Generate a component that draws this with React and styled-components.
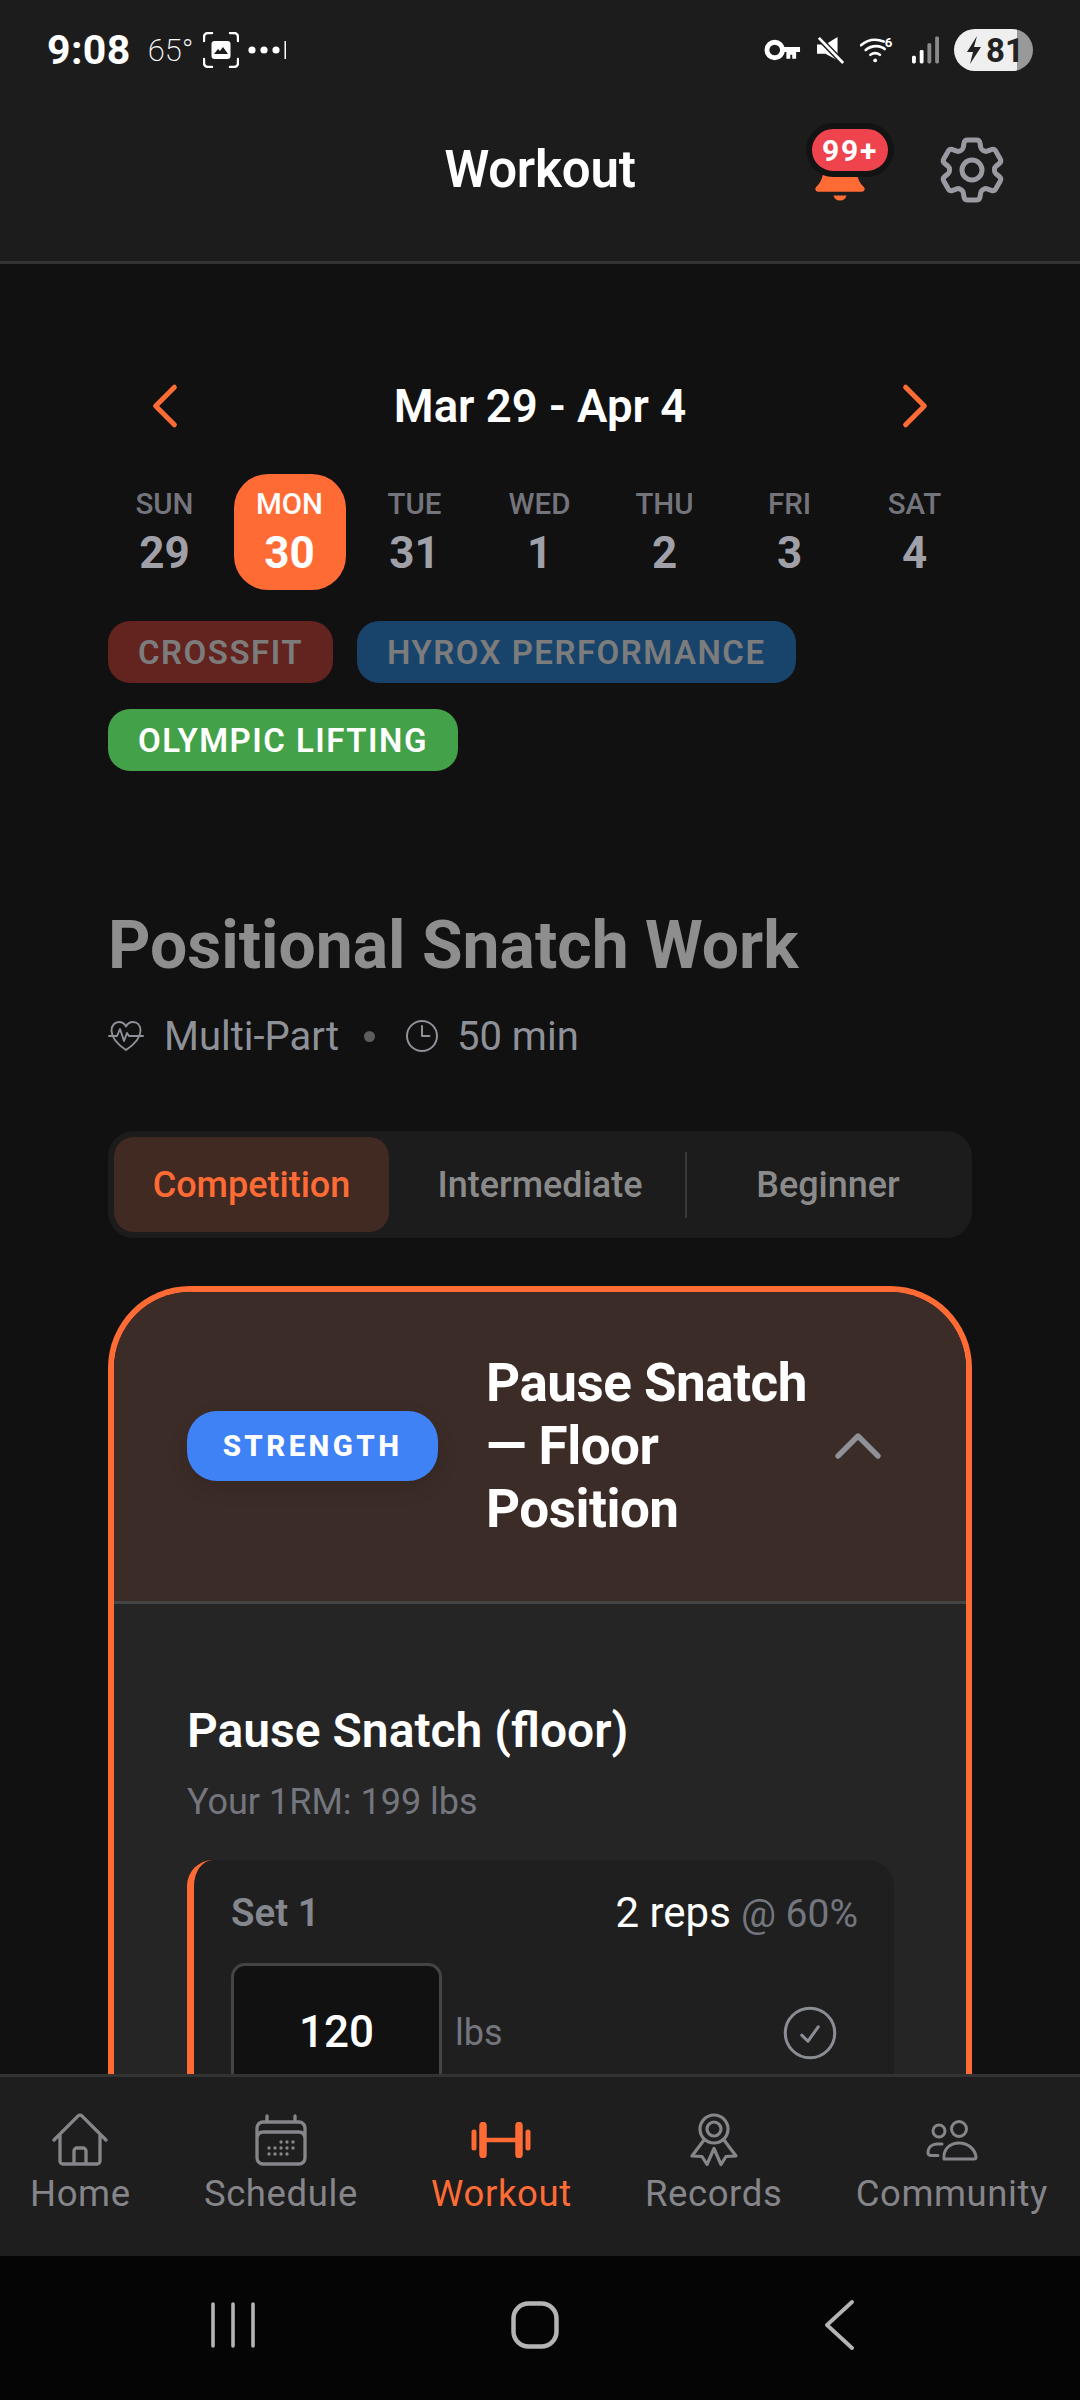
import React from "react";
import styled, { createGlobalStyle } from "styled-components";
import { HiOutlineCalendarDays, HiOutlineHome, HiOutlineClock, HiOutlineCheckCircle, HiOutlineChevronLeft, HiOutlineChevronRight, HiOutlineChevronUp } from "react-icons/hi2";

const Global = createGlobalStyle`
  html, body { margin: 0; padding: 0; background: #111; }
  * { box-sizing: border-box; }
  body { font-family: Roboto, "Liberation Sans", sans-serif; }
`;
const Screen = styled.div`width:1080px;height:2400px;display:flex;flex-direction:column;overflow:hidden;background:#111;`;
const Top = styled.header`height:264px;flex:none;background:#1c1c1c;border-bottom:3px solid #333;display:flex;flex-direction:column;`;
const Status = styled.div`height:96px;flex:none;display:flex;align-items:center;padding:4px 47px 0 47px;color:#fff;`;
const Time = styled.span`font-size:41px;font-weight:700;letter-spacing:.4px;`;
const Temp = styled.span`font-size:31px;font-weight:200;margin-left:17px;`;
const StatusLeft = styled.div`display:flex;align-items:center;flex:1;`;
const StatusRight = styled.div`display:flex;align-items:center;gap:15.5px;`;
const Battery = styled.div`width:79px;height:42px;border-radius:21px;overflow:hidden;display:flex;align-items:center;background:linear-gradient(90deg,#efefef 0 63px,#999 63px);color:#222;font-size:33px;font-weight:700;padding-left:11px;gap:3px;`;
const TitleBar = styled.div`flex:1;display:flex;align-items:center;justify-content:center;position:relative;padding-bottom:18px;`;
const Title = styled.h1`margin:0;color:#fff;font-size:51px;font-weight:600;letter-spacing:-.2px;`;
const Bell = styled.div`position:absolute;left:807px;top:49px;width:66px;height:66px;color:#ff6b35;`;
const Badge = styled.span`position:absolute;left:-1px;top:-22px;width:88px;height:54px;border-radius:27px;background:#ef444d;border:6px solid #131313;color:#fff;font-size:30px;font-weight:700;letter-spacing:1.8px;display:flex;align-items:center;justify-content:center;`;
const Gear = styled.div`position:absolute;left:932px;top:34px;width:80px;height:80px;color:#9a9aa2;`;
const Scroll = styled.main`flex:1;min-height:0;overflow:hidden;padding:118px 108px 0;`;
const WeekHead = styled.div`display:flex;align-items:center;justify-content:space-between;padding:0 27px;height:48px;color:#ff6b35;`;
const WeekTitle = styled.div`color:#fff;font-size:45.500px;font-weight:600;`;
const Days = styled.div`margin-top:44px;display:grid;grid-template-columns:repeat(7,125px);margin-left:-6px;`;
const Day = styled.div`height:116px;width:112px;justify-self:center;border-radius:34px;display:flex;flex-direction:column;align-items:center;justify-content:center;background:${p=>p.$on?"#ff6b35":"transparent"};`;
const DayName = styled.span`font-size:29.500px;font-weight:500;line-height:36px;color:${p=>p.$on?"#fff":"#74747c"};`;
const DayNum = styled.span`font-size:44px;font-weight:700;line-height:50px;margin-top:6px;color:${p=>p.$on?"#fff":"#a0a0a8"};`;
const Tags = styled.div`margin-top:31px;display:flex;flex-wrap:wrap;gap:26px 24px;width:864px;`;
const Tag = styled.span`height:62px;border-radius:22px;padding:0 30px;display:flex;align-items:center;background:${p=>p.$bg};color:${p=>p.$fg};font-size:33px;font-weight:600;letter-spacing:1.5px;`;
const WorkoutTitle = styled.h2`margin:139px 0 0;font-size:66px;line-height:72px;font-weight:700;color:#8e8e8e;`;
const Meta = styled.div`margin-top:30px;height:48px;display:flex;align-items:center;font-size:40px;color:#8f9199;`;
const MetaIcon = styled.span`display:flex;color:#8f9199;margin-right:${p=>p.$mr}px;`;
const Dot = styled.span`width:11px;height:11px;border-radius:50%;background:#5c5c5c;margin:0 27px 0 25px;`;
const Tabs = styled.div`margin-top:71px;height:107px;border-radius:26px;background:#1c1c1c;padding:6px;display:flex;align-items:stretch;overflow:hidden;`;
const TabBtn = styled.div`display:flex;flex:none;align-items:center;justify-content:center;width:${p=>p.$w}px;margin-left:${p=>p.$ml||0}px;border-radius:20px;font-size:36px;font-weight:500;background:${p=>p.$on?"#412a22":"transparent"};color:${p=>p.$on?"#ff6b35":"#8a8a8a"};`;
const TabRule = styled.span`width:2px;flex:none;height:66px;align-self:center;background:#3a3a3a;`;
const Card = styled.section`margin-top:48px;border:6px solid #ff6b35;border-bottom:none;border-radius:82px 82px 0 0;overflow:hidden;background:#252525;height:800px;`;
const CardHead = styled.div`height:312px;background:#3c2c27;border-bottom:3px solid #444;display:flex;align-items:center;padding:0 0 1px 73px;`;
const Pill = styled.span`width:251px;height:70px;flex:none;border-radius:30px;background:#3f82f6;color:#fff;font-size:29.500px;font-weight:800;letter-spacing:3.4px;display:flex;align-items:center;justify-content:center;box-shadow:0 8px 20px rgba(0,0,0,.12);`;
const CardTitle = styled.h3`margin:0 0 0 48px;width:340px;flex:none;font-size:53px;line-height:63px;font-weight:700;color:#fff;letter-spacing:-.5px;`;
const Caret = styled.span`display:flex;color:#8f9098;`;
const CardBody = styled.div`padding:100px 73px 0;`;
const Ex = styled.h4`margin:0;font-size:48px;line-height:54px;font-weight:600;color:#fff;`;
const Rm = styled.div`margin-top:23px;font-size:36px;line-height:42px;color:#74767e;`;
const SetCard = styled.div`margin-top:37px;width:707px;height:400px;border-left:7px solid #ff6b35;border-radius:26px;background:#1f1f1f;padding:24px 36px 0 37px;`;
const SetTop = styled.div`display:flex;align-items:center;justify-content:space-between;height:56px;`;
const SetName = styled.span`font-size:38.500px;font-weight:600;color:#85878f;`;
const Reps = styled.span`font-size:42px;color:#fff;`;
const Pct = styled.span`font-size:39px;color:#74767e;margin-left:10px;`;
const SetRow = styled.div`margin-top:23px;display:flex;align-items:flex-start;`;
const Weight = styled.div`width:211px;height:200px;border:3px solid #444;border-radius:14px;background:#111;color:#fff;font-size:44px;font-weight:500;display:flex;justify-content:center;padding-top:41px;line-height:50px;`;
const Unit = styled.span`margin:49px 0 0 13px;font-size:36px;line-height:42px;color:#74767e;`;
const Check = styled.span`margin:37px 15px 0 auto;display:flex;color:#8b8d95;`;
const Nav = styled.nav`height:182px;flex:none;background:#1e1e1e;border-top:3px solid #333;display:flex;justify-content:space-between;padding:36px 32px 0 30px;`;
const NavItem = styled.div`display:flex;flex-direction:column;align-items:center;color:${p=>p.$on?"#ff6b35":"#85858a"};`;
const NavIcon = styled.span`height:54px;width:54px;display:flex;align-items:center;justify-content:center;svg{flex:none;}`;
const NavLabel = styled.span`margin-top:6px;font-size:36.500px;line-height:41px;height:41px;overflow:hidden;letter-spacing:.6px;`;
const Android = styled.div`height:144px;flex:none;background:#050505;display:flex;align-items:center;color:#b4b4b4;padding:0 0 7px 211px;`;
const AndroidKey = styled.span`display:flex;margin-left:${p=>p.$ml}px;`;

const Key = () => <svg width="37" height="22" viewBox="0 0 38 22"><circle cx="11" cy="11" r="8" fill="none" stroke="#fff" strokeWidth="5"/><path d="M18 8h19v5h-4v7h-4v-4h-2v4h-4v-7h-5z" fill="#fff"/></svg>;
const Mute = () => <svg width="28" height="30" viewBox="0 0 30 30"><path d="M0 9h9L22 1v25L9 19H0z" fill="#fff"/><path d="M2 2l26 27" stroke="#1c1c1c" strokeWidth="6"/><path d="M2 2l26 27" stroke="#fff" strokeWidth="3"/></svg>;
const Wifi = () => <svg width="36" height="30" viewBox="0 0 38 30" fill="none" stroke="#fff" strokeWidth="2.8" strokeLinecap="round"><path d="M1 10c7-6 16-7 24-4"/><path d="M6 15c5-4 11-5 17-3 1 .3 2 1 3 2"/><path d="M11 20c3-2 7-2 10 0"/><circle cx="16" cy="26" r="2" fill="#fff" stroke="none"/><text x="26" y="12" fontSize="14" fontWeight="700" fill="#fff" stroke="none" fontFamily="Roboto">6</text></svg>;
const Signal = () => <svg width="27" height="30" viewBox="0 0 28 30"><rect x="0" y="21" width="4" height="8" rx="1.5" fill="#fff"/><rect x="8" y="15" width="4" height="14" rx="1.5" fill="#fff"/><rect x="16" y="8" width="4" height="21" rx="1.5" fill="#8a8a8a"/><rect x="24" y="1" width="4" height="28" rx="1.5" fill="#8a8a8a"/></svg>;
const Bolt = () => <svg width="18" height="30" viewBox="0 0 18 30"><path d="M12 1 2 17h6l-3 12 11-17h-7z" fill="#222"/></svg>;
const Shot = () => <svg width="36" height="36" viewBox="0 0 36 36" style={{marginLeft:9}}><path d="M1 9V5a4 4 0 0 1 4-4h4M27 1h4a4 4 0 0 1 4 4v4M35 27v4a4 4 0 0 1-4 4h-4M9 35H5a4 4 0 0 1-4-4v-4" fill="none" stroke="#fff" strokeWidth="2.4" strokeLinecap="round"/><rect x="8.5" y="9" width="19" height="18" rx="3" fill="#fff"/><path d="M11 22l4-5 2 2 3-4 5 7z" fill="#1c1c1c"/></svg>;
const Dots = () => <svg width="38" height="20" viewBox="0 0 38 20" style={{marginLeft:9}}><circle cx="4" cy="10" r="3.6" fill="#fff"/><circle cx="16" cy="10" r="3.6" fill="#fff"/><circle cx="28" cy="10" r="3.6" fill="#fff"/><rect x="36.5" y="1" width="1.6" height="18" fill="#fff"/></svg>;
const BellIcon = () => <svg width="66" height="66" viewBox="0 0 24 24" fill="currentColor"><path d="M3.262 15.326A1 1 0 0 0 4 17h16a1 1 0 0 0 .74-1.673C19.41 13.956 18 12.499 18 8A6 6 0 0 0 6 8c0 4.499-1.411 5.956-2.738 7.326"/><path d="M9.6 18.400h4.800a2.500 2.500 0 0 1-4.800 0z"/></svg>;
const GearIcon = () => <svg width="80" height="80" viewBox="0 0 24 24" fill="none" stroke="currentColor" strokeWidth="1.5" strokeLinecap="round" strokeLinejoin="round"><path d="M9.594 3.94c.09-.542.56-.94 1.11-.94h2.593c.55 0 1.02.398 1.11.94l.213 1.281c.063.374.313.686.645.87.074.04.147.083.22.127.325.196.72.257 1.075.124l1.217-.456a1.125 1.125 0 0 1 1.37.49l1.296 2.247a1.125 1.125 0 0 1-.26 1.431l-1.003.827c-.293.241-.438.613-.43.992a7.723 7.723 0 0 1 0 .255c-.008.378.137.75.43.991l1.004.827c.424.35.534.955.26 1.43l-1.298 2.247a1.125 1.125 0 0 1-1.369.491l-1.217-.456c-.355-.133-.75-.072-1.076.124a6.47 6.47 0 0 1-.22.128c-.331.183-.581.495-.644.869l-.213 1.281c-.09.543-.56.94-1.11.94h-2.594c-.55 0-1.019-.398-1.11-.94l-.213-1.281c-.062-.374-.312-.686-.644-.87a6.52 6.52 0 0 1-.22-.127c-.325-.196-.72-.257-1.076-.124l-1.217.456a1.125 1.125 0 0 1-1.369-.49l-1.297-2.247a1.125 1.125 0 0 1 .26-1.431l1.004-.827c.292-.24.437-.613.43-.991a6.932 6.932 0 0 1 0-.255c.007-.38-.138-.751-.43-.992l-1.004-.827a1.125 1.125 0 0 1-.26-1.43l1.297-2.247a1.125 1.125 0 0 1 1.37-.491l1.216.456c.356.133.751.072 1.076-.124.072-.044.146-.086.22-.128.332-.183.582-.495.644-.869l.214-1.28Z"/><circle cx="12" cy="12" r="3"/></svg>;
const HeartPulse = () => <svg width="36" height="34" viewBox="0 0 36 34" fill="none" stroke="currentColor" strokeWidth="1.900" strokeLinejoin="round" strokeLinecap="round"><path d="M18 31C12 27 4 21 3.500 12 3.500 6 7 3 11 3c3 0 5.500 1.500 7 4.500C19.500 4.500 22 3 25 3c4 0 7.500 3 7.500 9C32 21 24 27 18 31z"/><path d="M1 17h8l3-7 4 12 3-8 2 3h14"/></svg>;
const Dumbbell = () => <svg width="60" height="36" viewBox="0 0 60 36" fill="none" stroke="currentColor" strokeLinecap="round"><path d="M14 18h32" strokeWidth="4.500"/><path d="M12 3.500v29M48 3.500v29" strokeWidth="7.500"/><path d="M3 10v16M57 10v16" strokeWidth="5"/></svg>;
const Award = () => <svg width="48" height="54" viewBox="0 0 48 54" fill="none" stroke="currentColor" strokeWidth="3.200" strokeLinejoin="round" strokeLinecap="round"><circle cx="24" cy="16" r="14"/><circle cx="24" cy="16" r="7"/><path d="M14 27 2 43l10 .5 5 8 7-16 7 16 5-8 10-.5-12-16"/></svg>;
const Users = () => <svg width="52" height="42" viewBox="0 0 52 42" fill="none" stroke="currentColor" strokeWidth="3" strokeLinejoin="round" strokeLinecap="round"><circle cx="13" cy="12" r="6"/><circle cx="33" cy="10" r="7.500"/><path d="M18 40c-1-10 6-16 15-16s16 6 17 14c0 1-.5 2-2 2z"/><path d="M2 34c0-6 4-9 9-9h5M2 34c0 2 2 2.500 4 2.500h6"/></svg>;
const AndroidBars = () => <svg width="44" height="46" viewBox="0 0 44 46" fill="none" stroke="currentColor" strokeWidth="3.600" strokeLinecap="round"><path d="M2 2v42M22 2v42M42 2v42"/></svg>;
const AndroidHome = () => <svg width="48" height="48" viewBox="0 0 48 48" fill="none" stroke="currentColor" strokeWidth="4.500"><rect x="2.500" y="2.500" width="43" height="43" rx="15"/></svg>;
const AndroidBack = () => <svg width="30" height="50" viewBox="0 0 30 50" fill="none" stroke="currentColor" strokeWidth="3.800" strokeLinecap="round" strokeLinejoin="round"><path d="M28 2 3 25l25 23"/></svg>;

const days = [["SUN","29"],["MON","30",true],["TUE","31"],["WED","1"],["THU","2"],["FRI","3"],["SAT","4"]];
const tags = [["CROSSFIT","#63231f","#7c7c7c"],["HYROX PERFORMANCE","#18446c","#7c7c7c"],["OLYMPIC LIFTING","#43a14a","#fff"]];
const navs = [
  ["Home", <HiOutlineHome size={64} strokeWidth={1.25} />],
  ["Schedule", <HiOutlineCalendarDays size={64} strokeWidth={1.25} />],
  ["Workout", <Dumbbell />, true],
  ["Records", <Award />],
  ["Community", <Users />],
];

export default function App() {
  return (
    <Screen>
      <Global />
      <Top>
        <Status>
          <StatusLeft><Time>9:08</Time><Temp>65°</Temp><Shot /><Dots /></StatusLeft>
          <StatusRight><Key /><Mute /><Wifi /><Signal /><Battery><Bolt />81</Battery></StatusRight>
        </Status>
        <TitleBar>
          <Title>Workout</Title>
          <Bell><BellIcon /><Badge>99+</Badge></Bell>
          <Gear><GearIcon /></Gear>
        </TitleBar>
      </Top>
      <Scroll>
        <WeekHead><HiOutlineChevronLeft size={60} strokeWidth={2} /><WeekTitle>Mar 29 - Apr 4</WeekTitle><HiOutlineChevronRight size={60} strokeWidth={2} /></WeekHead>
        <Days>
          {days.map(([n, d, on]) => <Day key={n} $on={on}><DayName $on={on}>{n}</DayName><DayNum $on={on}>{d}</DayNum></Day>)}
        </Days>
        <Tags>{tags.map(([t, bg, fg]) => <Tag key={t} $bg={bg} $fg={fg}>{t}</Tag>)}</Tags>
        <WorkoutTitle>Positional Snatch Work</WorkoutTitle>
        <Meta>
          <MetaIcon $mr={20}><HeartPulse /></MetaIcon>Multi-Part<Dot /><MetaIcon $mr={15}><HiOutlineClock size={40} strokeWidth={1.2} /></MetaIcon>50 min
        </Meta>
        <Tabs>
          <TabBtn $on $w={275}>Competition</TabBtn>
          <TabBtn $w={290} $ml={6}>Intermediate</TabBtn>
          <TabRule />
          <TabBtn $w={282}>Beginner</TabBtn>
        </Tabs>
        <Card>
          <CardHead>
            <Pill>STRENGTH</Pill>
            <CardTitle>Pause Snatch — Floor Position</CardTitle>
            <Caret><HiOutlineChevronUp size={64} strokeWidth={2} /></Caret>
          </CardHead>
          <CardBody>
            <Ex>Pause Snatch (floor)</Ex>
            <Rm>Your 1RM: 199 lbs</Rm>
            <SetCard>
              <SetTop><SetName>Set 1</SetName><span><Reps>2 reps</Reps><Pct>@ 60%</Pct></span></SetTop>
              <SetRow>
                <Weight>120</Weight>
                <Unit>lbs</Unit>
                <Check><HiOutlineCheckCircle size={66} strokeWidth={1.1} /></Check>
              </SetRow>
            </SetCard>
          </CardBody>
        </Card>
      </Scroll>
      <Nav>
        {navs.map(([l, ic, on]) => <NavItem key={l} $on={on}><NavIcon>{ic}</NavIcon><NavLabel>{l}</NavLabel></NavItem>)}
      </Nav>
      <Android>
        <AndroidBars />
        <AndroidKey $ml={256}><AndroidHome /></AndroidKey>
        <AndroidKey $ml={265}><AndroidBack /></AndroidKey>
      </Android>
    </Screen>
  );
}
